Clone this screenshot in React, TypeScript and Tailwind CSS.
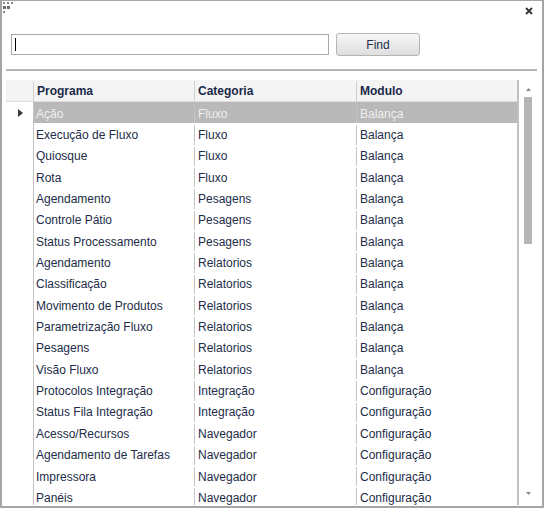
import React from 'react';

const rows: [string, string, string][] = [
  ['Ação', 'Fluxo', 'Balança'],
  ['Execução de Fluxo', 'Fluxo', 'Balança'],
  ['Quiosque', 'Fluxo', 'Balança'],
  ['Rota', 'Fluxo', 'Balança'],
  ['Agendamento', 'Pesagens', 'Balança'],
  ['Controle Pátio', 'Pesagens', 'Balança'],
  ['Status Processamento', 'Pesagens', 'Balança'],
  ['Agendamento', 'Relatorios', 'Balança'],
  ['Classificação', 'Relatorios', 'Balança'],
  ['Movimento de Produtos', 'Relatorios', 'Balança'],
  ['Parametrização Fluxo', 'Relatorios', 'Balança'],
  ['Pesagens', 'Relatorios', 'Balança'],
  ['Visão Fluxo', 'Relatorios', 'Balança'],
  ['Protocolos Integração', 'Integração', 'Configuração'],
  ['Status Fila Integração', 'Integração', 'Configuração'],
  ['Acesso/Recursos', 'Navegador', 'Configuração'],
  ['Agendamento de Tarefas', 'Navegador', 'Configuração'],
  ['Impressora', 'Navegador', 'Configuração'],
  ['Panéis', 'Navegador', 'Configuração'],
];

export default function App() {
  return (
    <div className="w-[544px] h-[508px] bg-white border-x-2 border-b-2 border-t border-[#a5a5a5] flex flex-col font-['Liberation_Sans',Arial,sans-serif] text-[12px] text-[#222c48]">
      {/* top bar: grip + close */}
      <div className="h-[32px] flex justify-between items-start shrink-0">
        <svg width="14" height="14" viewBox="0 0 14 14" className="ml-[0px] mt-[0px]">
          <rect x="1" y="1" width="2" height="2" fill="#8a8a8a" />
          <rect x="5" y="1" width="2" height="2" fill="#8a8a8a" />
          <rect x="9" y="1" width="2" height="2" fill="#8a8a8a" />
          <rect x="1" y="5" width="3" height="3" fill="#707070" />
          <rect x="5" y="5" width="3" height="3" fill="#707070" />
          <rect x="1" y="10" width="2" height="2" fill="#8a8a8a" />
        </svg>
        <svg width="8" height="8" viewBox="0 0 8 8" className="mr-[9px] mt-[6px]">
          <path d="M1 1L7 7M7 1L1 7" stroke="#333" strokeWidth="1.8" />
        </svg>
      </div>

      {/* search row */}
      <div className="h-[23px] flex items-center shrink-0 pl-[9px]">
        <div className="w-[318px] h-[21px] border border-[#a9a9a9] bg-white flex items-center pl-[3px]">
          <div className="w-px h-[13px] bg-black" />
        </div>
        <button className="ml-[7px] w-[84px] h-[23px] rounded-[3px] border border-[#b4b4b4] bg-gradient-to-b from-[#f6f6f6] to-[#dedede] text-[12px] text-[#222c48]">
          Find
        </button>
      </div>

      <div className="ml-[4px] mt-[13px] w-[531px] h-[2px] bg-[#b5b5b5] shrink-0" />

      {/* grid */}
      <div className="ml-[4px] mt-[9px] w-[531px] flex-1 flex overflow-hidden">
        <div className="w-[513px] flex flex-col border-r-2 border-[#c0c0c0] overflow-hidden">
          <div className="h-[22px] shrink-0 flex bg-[#f4f4f4] border-b border-[#dcdcdc] font-bold text-[#1c2a4a] pt-[1px]">
            <div className="w-[28px] border-r border-[#d0d0d0]" />
            <div className="w-[161px] border-r border-[#d0d0d0] flex items-center pl-[3px]">Programa</div>
            <div className="w-[162px] border-r border-[#d0d0d0] flex items-center pl-[3px]">Categoria</div>
            <div className="flex-1 flex items-center pl-[3px]">Modulo</div>
          </div>
          {rows.map((r, i) => {
            const sel = i === 0;
            return (
              <div key={i} className="h-[21.35px] shrink-0 flex">
                <div className="w-[28px] border-r border-[#c4c4c4] flex items-center pl-[12px]">
                  {sel && (
                    <svg width="5" height="8" viewBox="0 0 5 8">
                      <path d="M0 0L5 4L0 8Z" fill="#3a3a3a" />
                    </svg>
                  )}
                </div>
                <div className={`flex-1 flex pt-[2px] ${sel ? 'bg-[#b9b9b9] text-[#efefef]' : ''}`}>
                  <div className="w-[161px] border-r border-[#c4c4c4] flex items-center pl-[2px] whitespace-nowrap">{r[0]}</div>
                  <div className="w-[162px] border-r border-[#c4c4c4] flex items-center pl-[3px] whitespace-nowrap">{r[1]}</div>
                  <div className="flex-1 flex items-center pl-[3px] whitespace-nowrap">{r[2]}</div>
                </div>
              </div>
            );
          })}
        </div>

        {/* scrollbar */}
        <div className="flex-1 flex flex-col items-center pb-[10px]">
          <svg width="5" height="3" viewBox="0 0 5 3" className="mt-[8px]">
            <path d="M0 3L2.5 0L5 3Z" fill="#888" />
          </svg>
          <div className="mt-[6px] w-[8px] h-[147px] bg-[#b5b5b5]" />
          <div className="flex-1" />
          <svg width="5" height="3" viewBox="0 0 5 3">
            <path d="M0 0L2.5 3L5 0Z" fill="#888" />
          </svg>
        </div>
      </div>
      <div className="h-[1px] shrink-0" />
    </div>
  );
}
